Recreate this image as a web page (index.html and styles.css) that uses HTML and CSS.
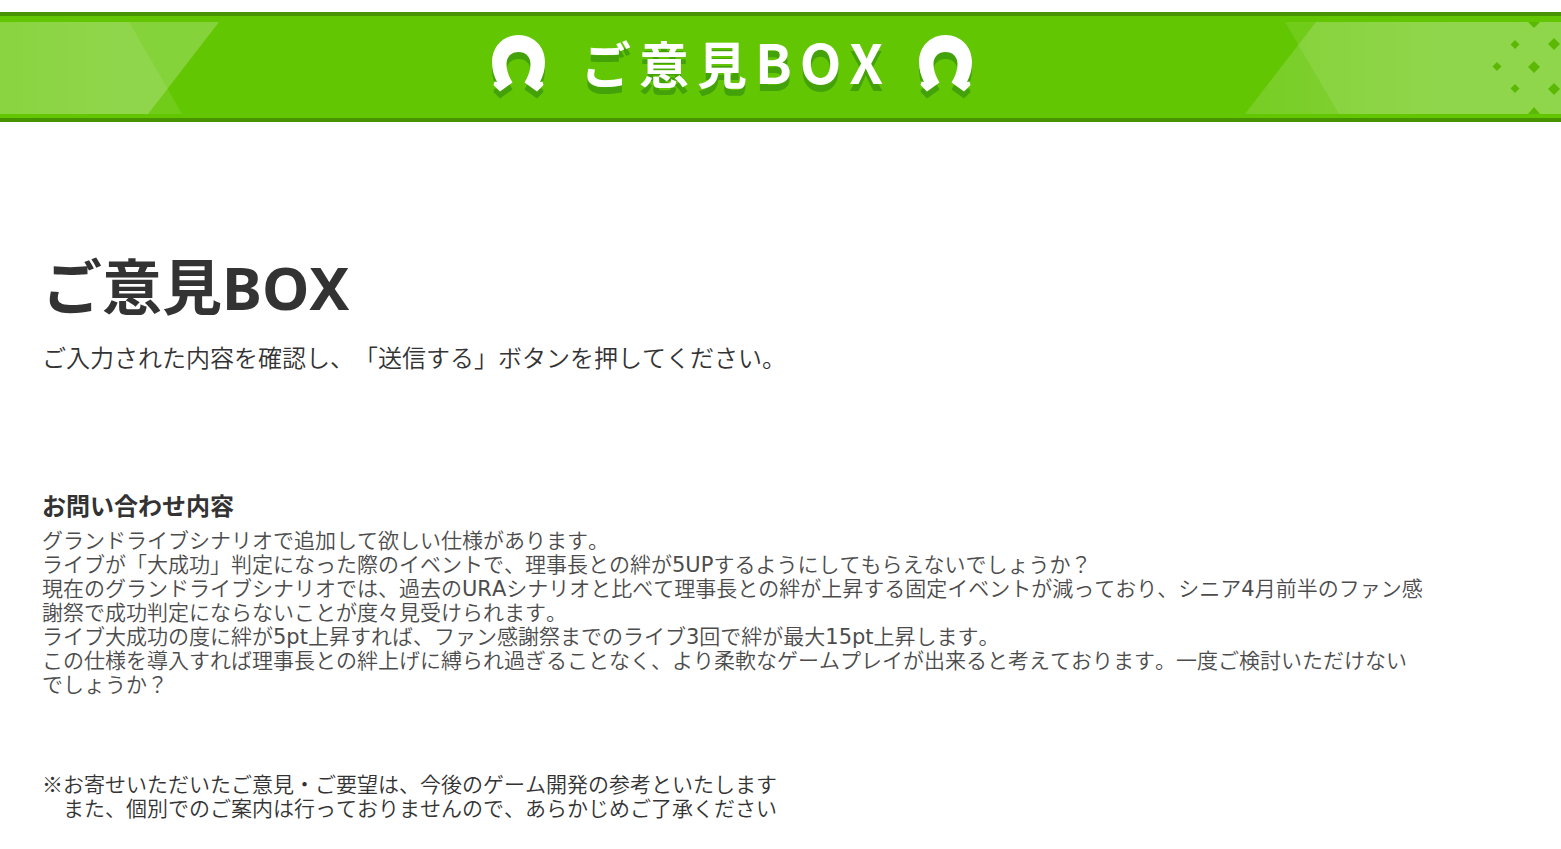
FILE: index.html
```html
<!DOCTYPE html>
<html lang="ja">
<head>
    <meta charset="UTF-8">
    <meta name="viewport" content="width=device-width, initial-scale=1.0">
    <title>ご意見BOX</title>
    <link rel="stylesheet" href="styles.css">
</head>
<body>
    <svg class="symbols" aria-hidden="true">
        <symbol id="horseshoe" viewBox="0 0 53 57">
            <path d="M26.5 0C11.500 0 0 11.500 0 27C0 35 2 41 5 47L2.500 46.500L1.500 50L8 56.500L20.500 47.500L18.500 44C16 39 14.500 34 14.500 29C14.500 21.500 19.500 17 26.500 17C33.500 17 38.500 21.500 38.500 29C38.500 34 37 39 34.500 44L32.500 47.500L45 56.500L51.500 50L50.500 46.500L48 47C51 41 53 35 53 27C53 11.500 41.500 0 26.500 0Z" fill="#fff"/>
        </symbol>
    </svg>

    <header class="banner">
        <svg class="banner-left" width="220" height="92" viewBox="0 0 220 92" aria-hidden="true">
            <defs>
                <linearGradient id="leftFade" x1="0" x2="1">
                    <stop offset="0" stop-color="#fff" stop-opacity="0.17"/>
                    <stop offset="0.5" stop-color="#fff" stop-opacity="0.22"/>
                    <stop offset="1" stop-color="#fff" stop-opacity="0.22"/>
                </linearGradient>
            </defs>
            <path d="M0 0H129L182 92H0Z" fill="#fff" fill-opacity="0.09"/>
            <path d="M0 0H219L148 92H0Z" fill="url(#leftFade)"/>
        </svg>

        <div class="banner-title">
            <svg class="horseshoe" aria-hidden="true"><use href="#horseshoe"/></svg>
            <span class="banner-text">ご意見<span class="banner-latin">BOX</span></span>
            <svg class="horseshoe" aria-hidden="true"><use href="#horseshoe"/></svg>
        </div>

        <svg class="banner-right" width="316" height="92" viewBox="0 0 316 92" aria-hidden="true">
            <defs>
                <linearGradient id="rightFade" x1="0" x2="1">
                    <stop offset="0" stop-color="#fff" stop-opacity="0.13"/>
                    <stop offset="0.6" stop-color="#fff" stop-opacity="0.22"/>
                    <stop offset="1" stop-color="#fff" stop-opacity="0.22"/>
                </linearGradient>
            </defs>
            <path d="M40 0H316V92H94Z" fill="#fff" fill-opacity="0.09"/>
            <path d="M71 0H316V92H0Z" fill="url(#rightFade)"/>
            <g fill="#5bb906">
                <path d="M252 40L256.500 44.500L252 49L247.500 44.500Z"/>
                <path d="M270 18L274.500 22.500L270 27L265.500 22.500Z"/>
                <path d="M270 62L274.500 66.500L270 71L265.500 66.500Z"/>
                <path d="M289 39L295 45L289 51L283 45Z"/>
                <path d="M309 16L315 22L309 28L303 22Z"/>
                <path d="M309 61L315 67L309 73L303 67Z"/>
                <path d="M283 0H295L289 6Z"/>
                <path d="M289 85L295 92H283Z"/>
            </g>
        </svg>
    </header>

    <main class="container">
        <h1>ご意見BOX</h1>
        <p class="lead">ご入力された内容を確認し、「送信する」ボタンを押してください。</p>

        <section class="inquiry">
            <h2>お問い合わせ内容</h2>
            <p>
                グランドライブシナリオで追加して欲しい仕様があります。<br>
                ライブが「大成功」判定になった際のイベントで、理事長との絆が<span class="latin">5UP</span>するようにしてもらえないでしょうか？<br>
                現在のグランドライブシナリオでは、過去の<span class="latin">URA</span>シナリオと比べて理事長との絆が上昇する固定イベントが減っており、シニア<span class="latin">4</span>月前半のファン感謝祭で成功判定にならないことが度々見受けられます。<br>
                ライブ大成功の度に絆が<span class="latin">5pt</span>上昇すれば、ファン感謝祭までのライブ<span class="latin">3</span>回で絆が最大<span class="latin">15pt</span>上昇します。<br>
                この仕様を導入すれば理事長との絆上げに縛られ過ぎることなく、より柔軟なゲームプレイが出来ると考えております。一度ご検討いただけないでしょうか？
            </p>
        </section>

        <p class="note">
            ※お寄せいただいたご意見・ご要望は、今後のゲーム開発の参考といたします<br>
            　また、個別でのご案内は行っておりませんので、あらかじめご了承ください
        </p>
    </main>
</body>
</html>
```
FILE: styles.css
```css
* {
    box-sizing: border-box;
}
body {
    margin: 0;
    padding-top: 12px;
    background-color: #fff;
    color: #333;
    font-family: "Noto Sans CJK JP", sans-serif;
    font-weight: 350;
    font-kerning: none;
    text-spacing-trim: space-all;
}
h1, h2, p {
    margin: 0;
}
.symbols {
    display: block;
    width: 0;
    height: 0;
}

/* banner: both decorations and the title share one grid cell */
.banner {
    display: grid;
    grid-template-columns: 1fr;
    padding: 6px 0 4px;
    background-color: #63c603;
    border-top: 4px solid #479303;
    border-bottom: 4px solid #479303;
}
.banner > * {
    grid-area: 1 / 1;
}
.banner-left {
    justify-self: start;
}
.banner-right {
    justify-self: end;
}
.banner-title {
    display: flex;
    align-items: center;
    justify-content: center;
    gap: 36px;
    max-width: 1464px;
    height: 82px;
}
.banner-text {
    padding-bottom: 4px;
    color: #fff;
    font-size: 50px;
    font-weight: 700;
    line-height: 60px;
    letter-spacing: 8px;
    margin-right: -8px;
    text-shadow: 0 7px 0 #43a209;
}
.banner-latin {
    font-size: 54px;
}
.horseshoe {
    width: 53px;
    height: 57px;
    filter: drop-shadow(0 7px 0 #43a209);
}

.container {
    max-width: 1464px;
    padding: 120px 38px 28px 42px;
}
h1 {
    font-family: "Noto Sans", "Noto Sans CJK JP", sans-serif;
    font-size: 60px;
    font-weight: 700;
    line-height: 90px;
}
.lead {
    margin-top: 7px;
    font-size: 24px;
    line-height: 36px;
}
.inquiry {
    margin-top: 112px;
}
.inquiry h2 {
    font-size: 24px;
    font-weight: 700;
    line-height: 36px;
}
.inquiry p {
    margin-top: 4px;
    color: #4c4c4c;
    font-size: 21px;
    line-height: 24px;
}
/* zero line height keeps the second font from stretching its line */
.latin {
    font-family: "DejaVu Sans", sans-serif;
    font-weight: 400;
    line-height: 0;
}
.note {
    margin-top: 76px;
    font-size: 21px;
    line-height: 24px;
}
```
